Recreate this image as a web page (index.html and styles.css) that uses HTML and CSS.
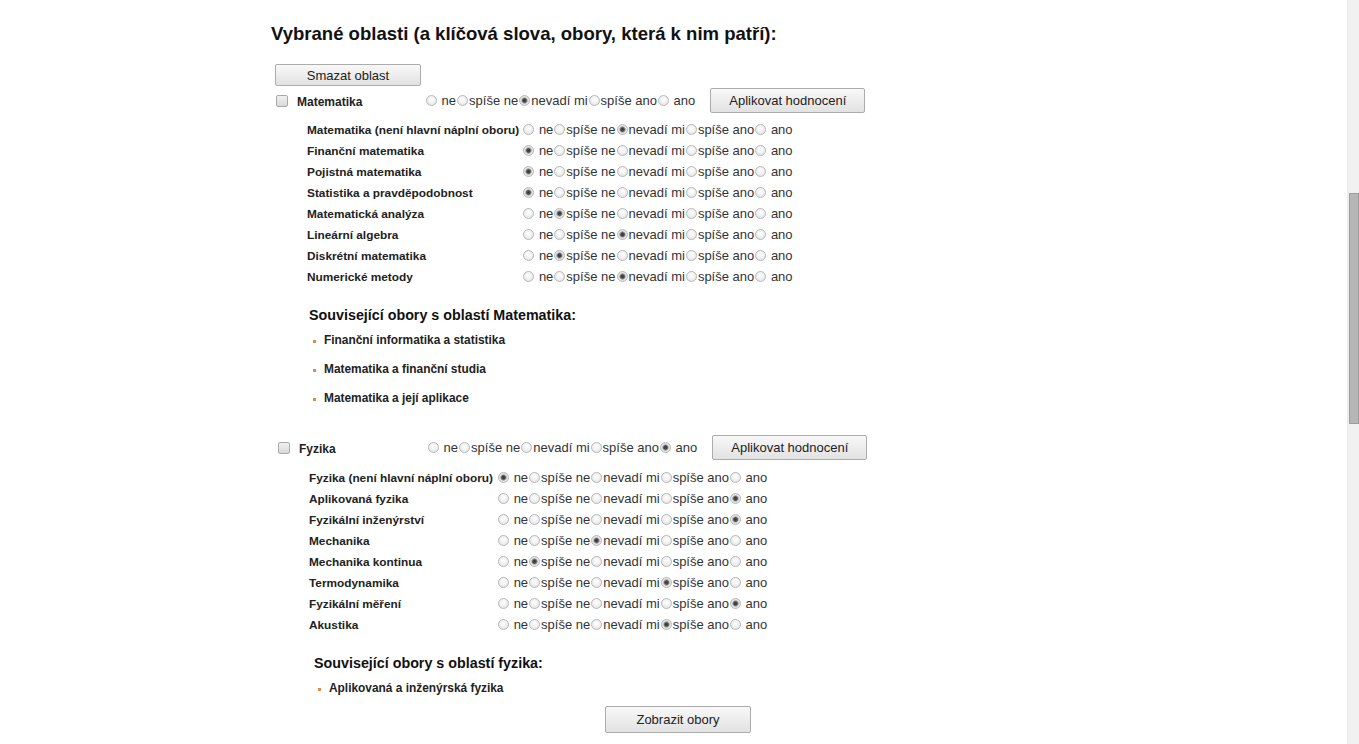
FILE: index.html
```html
<!DOCTYPE html>
<html lang="cs">
<head>
<meta charset="utf-8">
<title>Vybrané oblasti</title>
<link rel="stylesheet" href="styles.css">
</head>
<body>
<div class="page">
  <h2 class="title">Vybrané oblasti (a klíčová slova, obory, která k nim patří):</h2>
  <button class="btn btn-clear">Smazat oblast</button>

  <section class="area">
    <div class="area-head">
      <input type="checkbox" class="chk">
      <span class="area-name">Matematika</span>
      <span class="rating"><input type="radio" name="m"> ne<input type="radio" name="m">spíše ne<input type="radio" name="m" checked>nevadí mi<input type="radio" name="m">spíše ano<input type="radio" name="m"> ano</span>
      <button class="btn btn-apply">Aplikovat hodnocení</button>
    </div>
    <table class="sub">
      <tr><th>Matematika (není hlavní náplní oboru)</th><td class="rating"><input type="radio" name="m1"> ne<input type="radio" name="m1">spíše ne<input type="radio" name="m1" checked>nevadí mi<input type="radio" name="m1">spíše ano<input type="radio" name="m1"> ano</td></tr>
      <tr><th>Finanční matematika</th><td class="rating"><input type="radio" name="m2" checked> ne<input type="radio" name="m2">spíše ne<input type="radio" name="m2">nevadí mi<input type="radio" name="m2">spíše ano<input type="radio" name="m2"> ano</td></tr>
      <tr><th>Pojistná matematika</th><td class="rating"><input type="radio" name="m3" checked> ne<input type="radio" name="m3">spíše ne<input type="radio" name="m3">nevadí mi<input type="radio" name="m3">spíše ano<input type="radio" name="m3"> ano</td></tr>
      <tr><th>Statistika a pravděpodobnost</th><td class="rating"><input type="radio" name="m4" checked> ne<input type="radio" name="m4">spíše ne<input type="radio" name="m4">nevadí mi<input type="radio" name="m4">spíše ano<input type="radio" name="m4"> ano</td></tr>
      <tr><th>Matematická analýza</th><td class="rating"><input type="radio" name="m5"> ne<input type="radio" name="m5" checked>spíše ne<input type="radio" name="m5">nevadí mi<input type="radio" name="m5">spíše ano<input type="radio" name="m5"> ano</td></tr>
      <tr><th>Lineární algebra</th><td class="rating"><input type="radio" name="m6"> ne<input type="radio" name="m6">spíše ne<input type="radio" name="m6" checked>nevadí mi<input type="radio" name="m6">spíše ano<input type="radio" name="m6"> ano</td></tr>
      <tr><th>Diskrétní matematika</th><td class="rating"><input type="radio" name="m7"> ne<input type="radio" name="m7" checked>spíše ne<input type="radio" name="m7">nevadí mi<input type="radio" name="m7">spíše ano<input type="radio" name="m7"> ano</td></tr>
      <tr><th>Numerické metody</th><td class="rating"><input type="radio" name="m8"> ne<input type="radio" name="m8">spíše ne<input type="radio" name="m8" checked>nevadí mi<input type="radio" name="m8">spíše ano<input type="radio" name="m8"> ano</td></tr>
    </table>
    <div class="related">
      <h3 class="related-title">Související obory s oblastí Matematika:</h3>
      <ul class="related-list">
        <li>Finanční informatika a statistika</li>
        <li>Matematika a finanční studia</li>
        <li>Matematika a její aplikace</li>
      </ul>
    </div>
  </section>

  <section class="area area-fyz">
    <div class="area-head">
      <input type="checkbox" class="chk">
      <span class="area-name">Fyzika</span>
      <span class="rating"><input type="radio" name="f"> ne<input type="radio" name="f">spíše ne<input type="radio" name="f">nevadí mi<input type="radio" name="f">spíše ano<input type="radio" name="f" checked> ano</span>
      <button class="btn btn-apply">Aplikovat hodnocení</button>
    </div>
    <table class="sub">
      <tr><th>Fyzika (není hlavní náplní oboru)</th><td class="rating"><input type="radio" name="f1" checked> ne<input type="radio" name="f1">spíše ne<input type="radio" name="f1">nevadí mi<input type="radio" name="f1">spíše ano<input type="radio" name="f1"> ano</td></tr>
      <tr><th>Aplikovaná fyzika</th><td class="rating"><input type="radio" name="f2"> ne<input type="radio" name="f2">spíše ne<input type="radio" name="f2">nevadí mi<input type="radio" name="f2">spíše ano<input type="radio" name="f2" checked> ano</td></tr>
      <tr><th>Fyzikální inženýrství</th><td class="rating"><input type="radio" name="f3"> ne<input type="radio" name="f3">spíše ne<input type="radio" name="f3">nevadí mi<input type="radio" name="f3">spíše ano<input type="radio" name="f3" checked> ano</td></tr>
      <tr><th>Mechanika</th><td class="rating"><input type="radio" name="f4"> ne<input type="radio" name="f4">spíše ne<input type="radio" name="f4" checked>nevadí mi<input type="radio" name="f4">spíše ano<input type="radio" name="f4"> ano</td></tr>
      <tr><th>Mechanika kontinua</th><td class="rating"><input type="radio" name="f5"> ne<input type="radio" name="f5" checked>spíše ne<input type="radio" name="f5">nevadí mi<input type="radio" name="f5">spíše ano<input type="radio" name="f5"> ano</td></tr>
      <tr><th>Termodynamika</th><td class="rating"><input type="radio" name="f6"> ne<input type="radio" name="f6">spíše ne<input type="radio" name="f6">nevadí mi<input type="radio" name="f6" checked>spíše ano<input type="radio" name="f6"> ano</td></tr>
      <tr><th>Fyzikální měření</th><td class="rating"><input type="radio" name="f7"> ne<input type="radio" name="f7">spíše ne<input type="radio" name="f7">nevadí mi<input type="radio" name="f7">spíše ano<input type="radio" name="f7" checked> ano</td></tr>
      <tr><th>Akustika</th><td class="rating"><input type="radio" name="f8"> ne<input type="radio" name="f8">spíše ne<input type="radio" name="f8">nevadí mi<input type="radio" name="f8" checked>spíše ano<input type="radio" name="f8"> ano</td></tr>
    </table>
    <div class="related">
      <h3 class="related-title">Související obory s oblastí fyzika:</h3>
      <ul class="related-list">
        <li>Aplikovaná a inženýrská fyzika</li>
      </ul>
    </div>
  </section>

  <button class="btn btn-show">Zobrazit obory</button>
</div>

<div class="scrollbar"><div class="scrollbar-thumb"></div></div>
</body>
</html>
```

FILE: styles.css
```css
* {
  box-sizing: border-box;
}

body {
  margin: 0;
  background: #ffffff;
  font-family: "Liberation Sans", Arial, sans-serif;
  color: #222222;
}

.page {
  width: 817px;
  margin: 0 auto;
  padding-top: 23px;
}

.title {
  margin: 0;
  font-size: 18.55px;
  line-height: 22px;
  font-weight: bold;
  color: #111111;
}

.btn {
  font-family: "Liberation Sans", Arial, sans-serif;
  font-size: 13px;
  color: #222222;
  background: linear-gradient(#f8f8f8, #e2e2e2);
  border: 1px solid #acacac;
  border-radius: 2px;
  padding: 0;
}

.btn-clear {
  display: block;
  margin: 19px 0 0 4px;
  width: 146px;
  height: 22px;
}

.area-head {
  display: flex;
  align-items: center;
  height: 25px;
  margin-top: 2px;
}

.chk {
  appearance: none;
  -webkit-appearance: none;
  margin: 0 0 0 5px;
  width: 12px;
  height: 12px;
  border: 1px solid #a9a9a9;
  border-radius: 2px;
  background: linear-gradient(#f0f0f0, #d9d9d9);
  flex: none;
}

.area-name {
  margin-left: 9px;
  width: 128px;
  flex: none;
  font-size: 12px;
  font-weight: bold;
  color: #222222;
  padding-top: 2px;
}

.rating {
  font-size: 13px;
  white-space: nowrap;
  color: #333333;
}

.rating input {
  appearance: none;
  -webkit-appearance: none;
  width: 11px;
  height: 11px;
  margin: 0 1px;
  vertical-align: -1px;
  border: 1px solid #b9b9b9;
  border-radius: 50%;
  background: radial-gradient(circle at 50% 40%, #ffffff 0, #f2f2f2 45%, #dcdcdc 100%);
}

.rating input:checked {
  background: radial-gradient(circle, #3a3a3a 0, #4a4a4a 1.8px, #9b9b9b 2.6px, #e6e6e6 3.6px, #dadada 100%);
}

.btn-apply {
  margin-left: 15px;
  width: 155px;
  height: 25px;
  flex: none;
}

.sub {
  margin: 6px 0 0 36px;
  border-collapse: collapse;
}

.sub th {
  height: 21px;
  padding: 0 3px 0 0;
  text-align: left;
  font-size: 11.83px;
  font-weight: bold;
  color: #222222;
  white-space: nowrap;
}

.sub td {
  padding: 0;
}

.related {
  margin: 19px 0 0 38px;
}

.related-title {
  margin: 0;
  font-size: 14.3px;
  line-height: 18px;
  font-weight: bold;
  color: #111111;
}

.related-list {
  list-style: none;
  margin: 2px 0 0 0;
  padding: 0 0 0 4px;
}

.related-list li {
  height: 29px;
  line-height: 29px;
  font-size: 11.9px;
  font-weight: bold;
  color: #222222;
}

.related-list li::before {
  content: "";
  display: inline-block;
  width: 3px;
  height: 3px;
  margin-right: 8px;
  vertical-align: 1px;
  background: #dc8a44;
}

.area-fyz {
  margin-top: 22px;
  padding-left: 2px;
}

.area-fyz .sub {
  margin-top: 7px;
  margin-left: 36px;
}

.area-fyz .sub th {
  padding-right: 4px;
}

.area-fyz .related {
  margin-left: 41px;
}

.area-fyz .related-list li {
  height: 28px;
  line-height: 28px;
}

.btn-show {
  display: block;
  margin: 4px 0 0 334px;
  width: 146px;
  height: 27px;
}

.scrollbar {
  position: fixed;
  top: 0;
  right: 0;
  width: 12px;
  height: 744px;
  background: #f1f1f1;
  border-left: 1px solid #e9e9e9;
}

.scrollbar-thumb {
  position: absolute;
  top: 193px;
  left: 1px;
  right: 0;
  height: 231px;
  background: #b6b6b6;
  border: 1px solid #9d9d9d;
}
```
